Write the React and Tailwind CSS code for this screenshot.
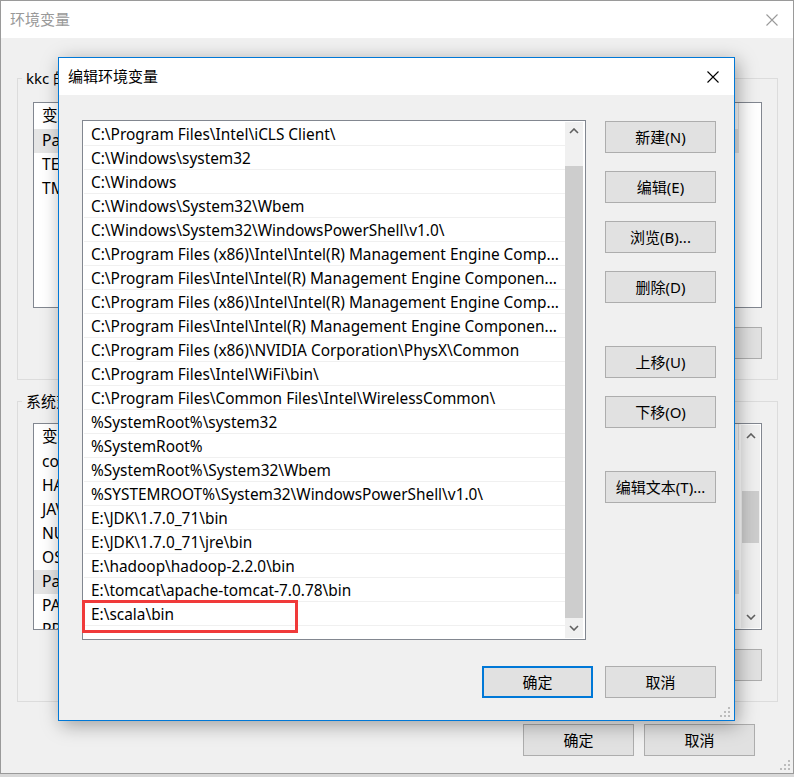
import React from 'react';

const paths = [
    'C:\\Program Files\\Intel\\iCLS Client\\',
    'C:\\Windows\\system32',
    'C:\\Windows',
    'C:\\Windows\\System32\\Wbem',
    'C:\\Windows\\System32\\WindowsPowerShell\\v1.0\\',
    'C:\\Program Files (x86)\\Intel\\Intel(R) Management Engine Comp...',
    'C:\\Program Files\\Intel\\Intel(R) Management Engine Componen...',
    'C:\\Program Files (x86)\\Intel\\Intel(R) Management Engine Comp...',
    'C:\\Program Files\\Intel\\Intel(R) Management Engine Componen...',
    'C:\\Program Files (x86)\\NVIDIA Corporation\\PhysX\\Common',
    'C:\\Program Files\\Intel\\WiFi\\bin\\',
    'C:\\Program Files\\Common Files\\Intel\\WirelessCommon\\',
    '%SystemRoot%\\system32',
    '%SystemRoot%',
    '%SystemRoot%\\System32\\Wbem',
    '%SYSTEMROOT%\\System32\\WindowsPowerShell\\v1.0\\',
    'E:\\JDK\\1.7.0_71\\bin',
    'E:\\JDK\\1.7.0_71\\jre\\bin',
    'E:\\hadoop\\hadoop-2.2.0\\bin',
    'E:\\tomcat\\apache-tomcat-7.0.78\\bin',
    'E:\\scala\\bin',
    '',
];

const userVars = [
    ['Path', 'C:\\Users\\kkc\\AppData\\Local\\Microsoft\\WindowsApps;', true],
    ['TEMP', '%USERPROFILE%\\AppData\\Local\\Temp', false],
    ['TMP', '%USERPROFILE%\\AppData\\Local\\Temp', false],
];

const sysVars = [
    ['configsetroot', 'C:\\Windows\\ConfigSetRoot', false],
    ['HADOOP_HOME', 'E:\\hadoop\\hadoop-2.2.0', false],
    ['JAVA_HOME', 'E:\\JDK\\1.7.0_71', false],
    ['NUMBER_OF_PROCESSORS', '4', false],
    ['OS', 'Windows_NT', false],
    ['Path', 'C:\\Program Files\\Intel\\iCLS Client\\;C:\\Windows\\system32', true],
    ['PATHEXT', '.COM;.EXE;.BAT;.CMD;.VBS;.VBE;.JS;.JSE;.WSF;.WSH;.MSC', false],
    ['PROCESSOR_ARCHITECTURE', 'AMD64', false],
];

function Chevron({ down }) {
    return (
        <svg width="10" height="6" viewBox="0 0 10 6">
            <polyline
                points={down ? '1,1 5,5 9,1' : '1,5 5,1 9,5'}
                fill="none"
                stroke="#606060"
                strokeWidth="1.6"
            />
        </svg>
    );
}

function CloseX({ color }) {
    return (
        <svg width="12" height="12" viewBox="0 0 12 12">
            <path d="M0.5 0.5 L11.5 11.5 M11.5 0.5 L0.5 11.5" stroke={color} strokeWidth="1.1" />
        </svg>
    );
}

function Grip() {
    return (
        <svg width="10" height="10" viewBox="0 0 10 10" fill="#bcbcbc">
            <rect x="8" y="0" width="2" height="2" />
            <rect x="4" y="4" width="2" height="2" />
            <rect x="8" y="4" width="2" height="2" />
            <rect x="0" y="8" width="2" height="2" />
            <rect x="4" y="8" width="2" height="2" />
            <rect x="8" y="8" width="2" height="2" />
        </svg>
    );
}

function Btn({ children, primary }) {
    return (
        <button
            className={
                primary
                    ? 'h-[32px] w-[111px] shrink-0 bg-[#e1e1e1] border-2 border-[#0078d7] flex items-center justify-center text-[15px] text-black'
                    : 'h-[32px] w-[111px] shrink-0 bg-[#e1e1e1] border border-[#adadad] flex items-center justify-center text-[15px] text-black'
            }
        >
            {children}
        </button>
    );
}

// background window list view (only its right edge shows past the dialog)
function VarList({ rows, height, scroll }) {
    return (
        <div className="flex border border-[#828790] bg-white" style={{ height }}>
            <div className="flex-1 flex flex-col overflow-hidden">
                <div className="h-[26px] w-[705px] shrink-0 flex items-center text-[15.6px] border-r border-[#e5e5e5]">
                    <span className="w-[240px] pl-[8px]">变量</span>
                    <span>值</span>
                </div>
                {rows.map(([k, v, sel], i) => (
                    <div
                        key={i}
                        className={
                            sel
                                ? 'h-[24px] w-[705px] shrink-0 flex items-center text-[15.6px] bg-[#e5e5e5] whitespace-nowrap overflow-hidden'
                                : 'h-[24px] w-[705px] shrink-0 flex items-center text-[15.6px] whitespace-nowrap overflow-hidden'
                        }
                    >
                        <span className="w-[240px] pl-[8px] shrink-0">{k}</span>
                        <span>{v}</span>
                    </div>
                ))}
            </div>
            {scroll && (
                <div className="w-[19px] mr-[1px] flex flex-col bg-[#f0f0f0] my-px">
                    <div className="h-[22px] flex items-center justify-center"><Chevron /></div>
                    <div className="flex-1 flex flex-col pt-[44px]">
                        <div className="bg-[#cdcdcd] mx-px h-[52px]" />
                    </div>
                    <div className="h-[22px] flex items-center justify-center"><Chevron down /></div>
                </div>
            )}
        </div>
    );
}

function Group({ label, children }) {
    return (
        <fieldset className="border border-[#dcdcdc] px-[15px] pb-[20px]">
            <legend className="-ml-[11px] px-[4px] h-[20px] leading-[20px] text-[15px]">{label}</legend>
            {children}
        </fieldset>
    );
}

export default function App() {
    return (
        <div className="w-[794px] h-[777px] overflow-hidden relative bg-[#d8d8d8] text-black font-['Noto_Sans','Noto_Sans_CJK_SC',sans-serif]">
            {/* background window: 环境变量 */}
            <div className="h-[774px] flex flex-col bg-[#f0f0f0] border border-[#9a9a9a]">
                <div className="h-[37px] shrink-0 bg-white flex items-center justify-between pl-[9px] pr-[15px]">
                    <span className="text-[15px] text-[#999999]">环境变量</span>
                    <CloseX color="#9a9a9a" />
                </div>
                <div className="pl-[16px] pr-[15px] pt-[30px]">
                    <Group label="kkc 的用户变量(U)">
                        <div className="pt-[14px]">
                            <VarList rows={userVars} height={206} />
                        </div>
                        <div className="flex justify-end gap-[12px] mt-[19px]">
                            <Btn>新建(N)...</Btn>
                            <Btn>编辑(E)...</Btn>
                            <Btn>删除(D)</Btn>
                        </div>
                    </Group>
                    <div className="h-[11px]" />
                    <Group label="系统变量(S)">
                        <div className="pt-[12px]">
                            <VarList rows={sysVars} height={207} scroll />
                        </div>
                        <div className="flex justify-end gap-[12px] mt-[19px]">
                            <Btn>新建(W)...</Btn>
                            <Btn>编辑(I)...</Btn>
                            <Btn>删除(L)</Btn>
                        </div>
                    </Group>
                    <div className="flex justify-end gap-[10px] mt-[22px] pr-[23px]">
                        <Btn>确定</Btn>
                        <Btn>取消</Btn>
                    </div>
                </div>
                <div className="flex-1 flex items-end justify-end pr-[3px] pb-[3px]">
                    <Grip />
                </div>
            </div>

            {/* dialog: 编辑环境变量 */}
            <div className="absolute left-[58px] top-[57px] w-[677px] h-[664px] flex flex-col bg-[#f0f0f0] border border-[#0078d7] shadow-[3px_4px_18px_rgba(0,0,0,0.35)]">
                <div className="h-[37px] shrink-0 bg-white flex items-center justify-between pl-[9px] pr-[15px]">
                    <span className="text-[15px]">编辑环境变量</span>
                    <CloseX color="#000000" />
                </div>
                <div className="flex-1 flex flex-col pl-[23px] pt-[25px]">
                    <div className="flex">
                        <div className="w-[504px] h-[520px] flex border border-[#828790] bg-white p-px">
                            <div className="flex-1 flex flex-col">
                                {paths.map((p, i) => (
                                    <div
                                        key={i}
                                        className="relative h-[24px] shrink-0 border-b border-[#f0f0f0] flex items-center pl-[7px] pt-[3px] text-[15.4px] whitespace-nowrap"
                                    >
                                        {p}
                                        {i === 20 && (
                                            <div className="absolute -left-[2px] -top-[2px] w-[216px] h-[33px] border-[3px] border-[#f03a3a]" />
                                        )}
                                    </div>
                                ))}
                            </div>
                            <div className="w-[18px] mr-[1px] flex flex-col bg-[#f0f0f0]">
                                <div className="h-[18px] flex items-center justify-center"><Chevron /></div>
                                <div className="flex-1 flex flex-col pt-[26px]">
                                    <div className="flex-1 bg-[#cdcdcd]" />
                                </div>
                                <div className="h-[20px] flex items-center justify-center"><Chevron down /></div>
                            </div>
                        </div>
                        <div className="ml-[19px] pt-[1px] flex flex-col">
                            <div className="flex flex-col gap-[18px]">
                                <Btn>新建(N)</Btn>
                                <Btn>编辑(E)</Btn>
                                <Btn>浏览(B)...</Btn>
                                <Btn>删除(D)</Btn>
                            </div>
                            <div className="flex flex-col gap-[18px] mt-[43px]">
                                <Btn>上移(U)</Btn>
                                <Btn>下移(O)</Btn>
                            </div>
                            <div className="mt-[43px]">
                                <Btn>编辑文本(T)...</Btn>
                            </div>
                        </div>
                    </div>
                    <div className="flex justify-end gap-[12px] mt-[26px] pr-[18px]">
                        <Btn primary>确定</Btn>
                        <Btn>取消</Btn>
                    </div>
                    <div className="flex-1 flex items-end justify-end pr-[4px] pb-[3px]">
                        <Grip />
                    </div>
                </div>
            </div>
        </div>
    );
}
